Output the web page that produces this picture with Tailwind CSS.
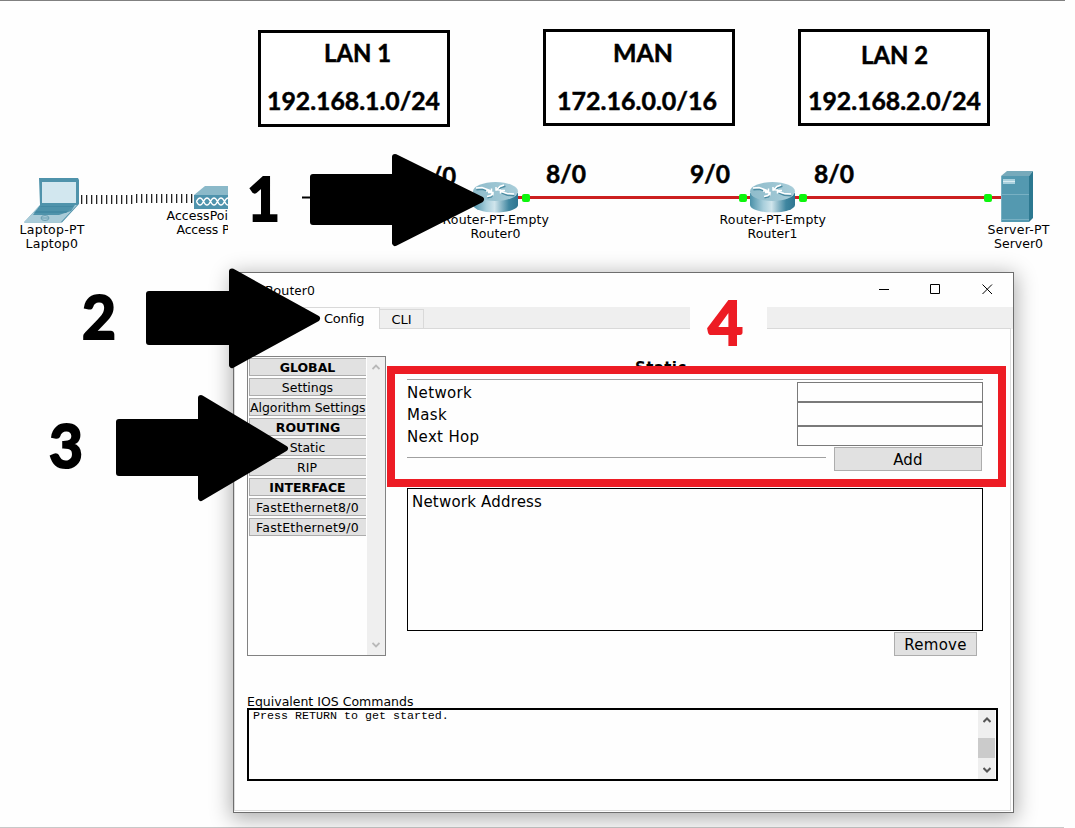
<!DOCTYPE html>
<html lang="en">
<head>
<meta charset="utf-8">
<title>Static route configuration</title>
<script src="https://cdn.jsdelivr.net/npm/@tailwindcss/browser@4"></script>
</head>
<body class="bg-white">
<main class="relative w-[1075px] h-[828px] overflow-hidden bg-[#fefefe] text-black font-['DejaVu_Sans',sans-serif]">
  <div class="absolute top-0 left-0 w-[1065px] h-px bg-[#808080]"></div>
  <div class="absolute top-[827px] left-0 w-[1064px] h-px bg-[#c8c8c8]"></div>

  <!-- Network topology -->
  <svg class="absolute inset-0" width="1075" height="270" viewBox="0 0 1075 270">
    <defs>
      <linearGradient id="side" x1="0" x2="1"><stop offset="0" stop-color="#4a90a8"/><stop offset=".3" stop-color="#a9cfdc"/><stop offset=".48" stop-color="#d0e5ec"/><stop offset=".8" stop-color="#3f86a0"/><stop offset="1" stop-color="#2f7590"/></linearGradient>
      <linearGradient id="top" x1="0" x2="1"><stop offset="0" stop-color="#8fbccb"/><stop offset="1" stop-color="#a8cdd9"/></linearGradient>
      <g id="router">
        <path d="M0 11V23C0 27 10 30.500 22.500 30.500S45 27 45 23V11Z" fill="url(#side)"/>
        <ellipse cx="22.500" cy="9.500" rx="22.500" ry="9.500" fill="url(#top)"/>
        <g fill="none" stroke="#4c8ca2" stroke-width="1.600" transform="translate(.4 1.200)"><path d="M3 6.500L9 6 17 8.500M24 7.500L27 4.500 32 3M41 12.500L34 12 28 9.500M20 10.500L18 13.500 14 14.500"/></g>
        <g fill="none" stroke="#fff" stroke-width="1.500"><path d="M3 6L9 5.500 17 8.500M13 9H18.500V6.500M24 7.500L27 4.500 31 3M23 5V8H28M41 12L34 11.500 28 9.500M32 8.500H27.500V11.500M20 10.500L18 13.500 14 14.500M15 10.500H20V13.500"/></g>
      </g>
    </defs>

    <g fill="#fff" stroke="#000" stroke-width="3">
      <rect x="259.500" y="31.500" width="189" height="94"/>
      <rect x="544.500" y="30.500" width="189" height="94"/>
      <rect x="799.500" y="30.500" width="189" height="94"/>
    </g>
    <g class="font-bold font-[Lato,sans-serif] text-[25px]" stroke="#000" stroke-width=".5">
      <text x="324" y="62" textLength="67" lengthAdjust="spacingAndGlyphs">LAN 1</text>
      <text x="267" y="110" textLength="173" lengthAdjust="spacingAndGlyphs">192.168.1.0/24</text>
      <text x="613" y="62" textLength="60" lengthAdjust="spacingAndGlyphs">MAN</text>
      <text x="557" y="110" textLength="160" lengthAdjust="spacingAndGlyphs">172.16.0.0/16</text>
      <text x="861" y="64" textLength="67" lengthAdjust="spacingAndGlyphs">LAN 2</text>
      <text x="808" y="110" textLength="173" lengthAdjust="spacingAndGlyphs">192.168.2.0/24</text>
      <text x="431" y="185" textLength="25" lengthAdjust="spacingAndGlyphs">/0</text>
      <text x="546" y="183" textLength="40" lengthAdjust="spacingAndGlyphs">8/0</text>
      <text x="690" y="183" textLength="40" lengthAdjust="spacingAndGlyphs">9/0</text>
      <text x="814" y="183" textLength="40" lengthAdjust="spacingAndGlyphs">8/0</text>
    </g>

    <!-- Links -->
    <path d="M302 197.500H320" stroke="#000" stroke-width="2"/>
    <path d="M516 197.500H752M794 197.500H1002" stroke="#cc1f1f" stroke-width="3"/>
    <g fill="#0df50d">
      <rect x="522" y="194" width="8" height="8" rx="2"/><rect x="739" y="194" width="8" height="8" rx="2"/>
      <rect x="799" y="194" width="8" height="8" rx="2"/><rect x="984" y="194" width="8" height="8" rx="2"/>
    </g>
    <path d="M81 199.500H134" stroke="#222" stroke-width="9" stroke-dasharray="1.300 3.700"/>
    <path d="M136 198.500H194" stroke="#222" stroke-width="9" stroke-dasharray="1.300 3.700"/>

    <!-- Laptop -->
    <path d="M39 178L78 178 79 180V204L62 222.500H24L40 205Z" fill="#4f93ab"/>
    <path d="M42 182H76V203H42Z" fill="#d2e7ef"/>
    <path d="M39.500 206L24 222H61L77 205L75 205 71 211 59 215H33Z" fill="#a9cbd8"/>
    <path d="M41 206H73L66 213H34Z" fill="#4389a3"/><path d="M39 208H72M37 210H70" stroke="#64a3b8" stroke-width=".7"/>
    <ellipse cx="45" cy="218" rx="4" ry="2.500" fill="none" stroke="#6b9fb2"/><path d="M41 218H49" stroke="#6b9fb2"/>

    <!-- Access point -->
    <path d="M194 195L205 186H228V195Z" fill="#8bb9c9"/><path d="M194 195H228V209H194Z" fill="#4f93ad"/>
    <svg x="194" y="195" width="34" height="14" viewBox="194 195 34 14">
      <path d="M196.500 201.500q3.500-7 7 0t7 0t7 0t7 0t7 0M196.500 201.500q3.500 7 7 0t7 0t7 0t7 0t7 0" fill="none" stroke="#fff" stroke-width="1.400"/>
    </svg>

    <use href="#router" x="473" y="182"/>
    <use href="#router" x="750" y="182"/>

    <!-- Server -->
    <path d="M1001 176L1007 171H1033L1029 176Z" fill="#77aabb"/><path d="M1029 176L1033 171V218L1029 222Z" fill="#2c7890"/>
    <path d="M1001 176H1029V222H1001Z" fill="#5499b0"/><path d="M1001.500 176V222M1001 194.500H1029M1001 219.500H1029" stroke="#78b0c3" stroke-width="1"/>
    <path d="M1003 179H1015V184H1003Z" fill="#a9d0dd"/><path d="M1003 181.500H1015" stroke="#d9edf3"/>

    <g class="text-[12.500px]">
      <text x="19.500" y="234" textLength="65">Laptop-PT</text>
      <text x="25.500" y="248" textLength="52.500">Laptop0</text>
      <svg x="160" y="205" width="68" height="34" viewBox="160 205 68 34">
        <text x="166.500" y="220" textLength="61.500">AccessPoi</text>
        <text x="176.500" y="234" textLength="53">Access P</text>
      </svg>
      <text x="442.500" y="224" textLength="106.500">Router-PT-Empty</text>
      <text x="470.500" y="238" textLength="50">Router0</text>
      <text x="719.500" y="224" textLength="106.500">Router-PT-Empty</text>
      <text x="747.500" y="238" textLength="50">Router1</text>
      <text x="987.500" y="234" textLength="62">Server-PT</text>
      <text x="994" y="248" textLength="49">Server0</text>
    </g>
  </svg>

  <!-- Router0 window -->
  <section class="absolute left-[233px] top-[272px] w-[781px] h-[541px] border border-[#6e6e6e] bg-[#fefefe] shadow-[0_4px_20px_2px_rgba(0,0,0,0.32)] flex flex-col">
    <header class="h-[34px] shrink-0 flex items-center justify-between">
      <h1 class="pl-[31px] font-['Noto_Sans',sans-serif] text-[13px] tracking-[0.150px] leading-none">Router0</h1>
      <svg width="134" height="34" viewBox="0 0 134 34" fill="none" stroke="#000"><path d="M0 16.500H10M103.500 11.500L113 21M113 11.500L103.500 21"/><path d="M51.500 11.500H60.500V20.500H51.500Z"/></svg>
    </header>
    <nav class="h-[22px] shrink-0 flex items-end bg-[#efefef] text-[13px]">
      <div class="w-[146px] h-[22px] pl-[90px] bg-[#fefefe] border-t border-r border-[#d9d9d9] leading-[21px] tracking-[-0.250px]">Config</div>
      <div class="w-[44px] h-[20px] border border-l-0 border-[#d9d9d9] text-center leading-[19px]">CLI</div>
      <div class="flex-1 border-b border-[#d9d9d9] h-[22px] mr-[2px]"></div>
    </nav>
    <div class="flex-1 mr-[2px] mb-[1px] border-r border-b border-l border-[#dcdcdc] flex flex-col pl-[12px] pt-[27px]">
      <div class="flex gap-[21px] h-[300px]">
        <aside class="w-[139px] h-[300px] border border-[#828282] flex justify-between">
          <ul class="w-[118px] pl-px pt-px flex flex-col gap-[2px] text-[12.500px] text-center whitespace-nowrap">
            <li class="h-[18px] border border-r-0 border-[#adadad] bg-[#e1e1e1] leading-[18px] pr-px font-bold">GLOBAL</li>
            <li class="h-[18px] border border-r-0 border-[#adadad] bg-[#e1e1e1] leading-[18px] pr-px">Settings</li>
            <li class="h-[18px] border border-r-0 border-[#adadad] bg-[#e1e1e1] leading-[18px] pr-[2px] tracking-[-0.050px]">Algorithm Settings</li>
            <li class="h-[18px] border border-r-0 border-[#adadad] bg-[#e1e1e1] leading-[18px] font-bold">ROUTING</li>
            <li class="h-[18px] border border-r-0 border-[#adadad] bg-[#e1e1e1] leading-[18px] pr-px">Static</li>
            <li class="h-[18px] border border-r-0 border-[#adadad] bg-[#e1e1e1] leading-[18px] pr-[2px]">RIP</li>
            <li class="h-[18px] border border-r-0 border-[#adadad] bg-[#e1e1e1] leading-[18px] pr-px font-bold">INTERFACE</li>
            <li class="h-[18px] border border-r-0 border-[#adadad] bg-[#e1e1e1] leading-[18px] pr-px tracking-[0.250px]">FastEthernet8/0</li>
            <li class="h-[18px] border border-r-0 border-[#adadad] bg-[#e1e1e1] leading-[18px] pr-px tracking-[0.250px]">FastEthernet9/0</li>
          </ul>
          <div class="w-[18px] bg-[#efefef] flex flex-col justify-between items-center py-[7px]">
            <svg width="8" height="6" viewBox="0 0 8 6" fill="none" stroke="#b8b8b8" stroke-width="1.800"><path d="M.5 5L4 1.500 7.500 5"/></svg>
            <svg width="8" height="6" viewBox="0 0 8 6" fill="none" stroke="#b8b8b8" stroke-width="1.800"><path d="M.5 1L4 4.500 7.500 1"/></svg>
          </div>
        </aside>
        <div class="w-[576px] flex flex-col">
          <h2 class="h-[23px] pl-[228px] pt-[4px] text-[15px] tracking-[0.400px] leading-[16px] font-bold">Static</h2>
          <div class="h-px mb-[2px] bg-[#a0a0a0]"></div>
          <div class="flex justify-between h-[65px] text-[15px] tracking-[0.350px]">
            <div class="flex flex-col leading-[22px]"><label>Network</label><label>Mask</label><label>Next Hop</label></div>
            <div class="w-[186px] flex flex-col">
              <div class="h-[20px] border border-[#7a7a7a]"></div>
              <div class="h-[24px] border border-[#7a7a7a]"></div>
              <div class="h-[20px] border border-[#7a7a7a]"></div>
            </div>
          </div>
          <div class="flex h-[24px] pr-px justify-between">
            <div class="w-[419px] h-px mt-[10px] bg-[#a0a0a0]"></div>
            <div class="w-[148px] h-[24px] border border-[#adadad] bg-[#e1e1e1] text-center text-[15px] tracking-[0.200px] leading-[24px]">Add</div>
          </div>
          <div class="mt-[17px] h-[143px] shrink-0 border border-black pl-[4px] text-[15px] tracking-[0.200px] leading-[26px]">Network Address</div>
          <div class="mt-px mr-[6px] self-end shrink-0 w-[83px] h-[24px] border border-[#adadad] bg-[#e1e1e1] text-center text-[15px] tracking-[0.300px] leading-[24px]">Remove</div>
        </div>
      </div>
      <p class="mt-[38px] h-[14px] text-[12.500px] leading-[15px]">Equivalent IOS Commands</p>
      <div class="w-[751px] h-[73px] border-2 border-black flex justify-between">
        <pre class="pl-[4px] font-['Liberation_Mono',monospace] text-[11.670px] leading-[12px]">Press RETURN to get started.</pre>
        <div class="w-[18px] bg-[#efefef] border-r border-[#fefefe] flex flex-col items-center justify-between">
          <svg class="mt-[7px]" width="8" height="6" viewBox="0 0 8 6" fill="none" stroke="#555" stroke-width="2"><path d="M.5 5L4 1.500 7.500 5"/></svg>
          <div class="w-full h-[20px] mt-[6px] bg-[#cbcbcb]"></div>
          <svg class="mb-[6px]" width="8" height="6" viewBox="0 0 8 6" fill="none" stroke="#555" stroke-width="2"><path d="M.5 1L4 4.500 7.500 1"/></svg>
        </div>
      </div>
    </div>
  </section>

  <!-- Step annotations -->
  <svg class="absolute inset-0" width="1075" height="828" viewBox="0 0 1075 828">
    <rect x="690" y="290" width="77" height="62" fill="#fefefe"/>
    <rect x="391" y="370" width="611" height="113" fill="none" stroke="#ed1c24" stroke-width="8"/>
    <g stroke="#000" stroke-width="6" stroke-linejoin="round">
      <path d="M313 177H395V157L481 199.500 395 243V222H313Z"/>
      <path d="M149 294H232V271.500L317 318.500 232 365V342H149Z"/>
      <path d="M119 422H201V398L285 448.500 201 498V473H119Z"/>
    </g>
    <g class="font-bold font-[Lato,sans-serif] text-[62px]" stroke="#000" stroke-width="2.200">
      <text x="247" y="221" textLength="33" lengthAdjust="spacingAndGlyphs">1</text>
      <text x="82" y="339" textLength="34" lengthAdjust="spacingAndGlyphs">2</text>
      <text x="49" y="468" textLength="34" lengthAdjust="spacingAndGlyphs">3</text>
      <text x="708" y="345" textLength="35" lengthAdjust="spacingAndGlyphs" fill="#ed1c24" stroke="#ed1c24">4</text>
    </g>
  </svg>
</main>
</body>
</html>
